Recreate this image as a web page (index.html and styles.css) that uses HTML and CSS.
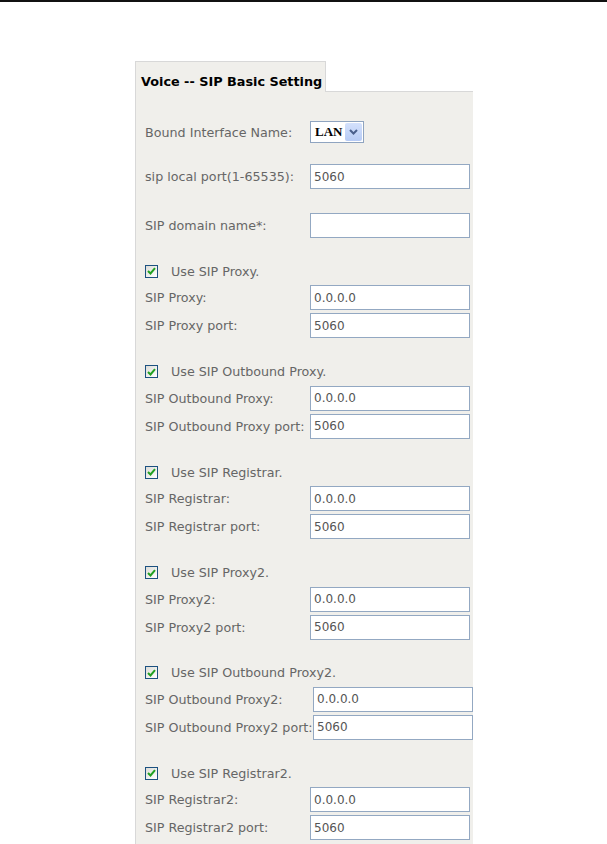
FILE: index.html
```html
<!DOCTYPE html>
<html>
<head>
<meta charset="utf-8">
<link rel="stylesheet" href="styles.css">
</head>
<body>
<div class="rule"></div>
<div class="page">
  <div class="panel">
    <div class="tabbar">
      <div class="tab">Voice -- SIP Basic Setting</div>
      <div class="tabfill"></div>
    </div>
    <div class="body">
      <div class="row row-select">
        <span class="label">Bound Interface Name:</span>
        <div class="select"><span class="sel-text">LAN</span><span class="sel-btn"><svg width="9" height="6" viewBox="0 0 9 6"><path d="M1 1 L4.5 4.5 L8 1" fill="none" stroke="#4a5f8c" stroke-width="2"/></svg></span></div>
      </div>
      <div class="row row-port">
        <span class="label">sip local port(1-65535):</span>
        <input class="field" type="text" value="5060">
      </div>
      <div class="row row-domain">
        <span class="label">SIP domain name*:</span>
        <input class="field" type="text" value="">
      </div>

      <div class="group">
        <div class="check-row"><span class="cb"><svg width="9" height="8" viewBox="0 0 9 8"><path d="M1 4 L3.5 6.5 L8 1.2" fill="none" stroke="#21a121" stroke-width="2"/></svg></span><span class="cb-label">Use SIP Proxy.</span></div>
        <div class="row"><span class="label">SIP Proxy:</span><input class="field" type="text" value="0.0.0.0"></div>
        <div class="row"><span class="label">SIP Proxy port:</span><input class="field" type="text" value="5060"></div>
      </div>

      <div class="group">
        <div class="check-row"><span class="cb"><svg width="9" height="8" viewBox="0 0 9 8"><path d="M1 4 L3.5 6.5 L8 1.2" fill="none" stroke="#21a121" stroke-width="2"/></svg></span><span class="cb-label">Use SIP Outbound Proxy.</span></div>
        <div class="row"><span class="label">SIP Outbound Proxy:</span><input class="field" type="text" value="0.0.0.0"></div>
        <div class="row"><span class="label">SIP Outbound Proxy port:</span><input class="field" type="text" value="5060"></div>
      </div>

      <div class="group">
        <div class="check-row"><span class="cb"><svg width="9" height="8" viewBox="0 0 9 8"><path d="M1 4 L3.5 6.5 L8 1.2" fill="none" stroke="#21a121" stroke-width="2"/></svg></span><span class="cb-label">Use SIP Registrar.</span></div>
        <div class="row"><span class="label">SIP Registrar:</span><input class="field" type="text" value="0.0.0.0"></div>
        <div class="row"><span class="label">SIP Registrar port:</span><input class="field" type="text" value="5060"></div>
      </div>

      <div class="group">
        <div class="check-row"><span class="cb"><svg width="9" height="8" viewBox="0 0 9 8"><path d="M1 4 L3.5 6.5 L8 1.2" fill="none" stroke="#21a121" stroke-width="2"/></svg></span><span class="cb-label">Use SIP Proxy2.</span></div>
        <div class="row"><span class="label">SIP Proxy2:</span><input class="field" type="text" value="0.0.0.0"></div>
        <div class="row"><span class="label">SIP Proxy2 port:</span><input class="field" type="text" value="5060"></div>
      </div>

      <div class="group group-wide">
        <div class="check-row"><span class="cb"><svg width="9" height="8" viewBox="0 0 9 8"><path d="M1 4 L3.5 6.5 L8 1.2" fill="none" stroke="#21a121" stroke-width="2"/></svg></span><span class="cb-label">Use SIP Outbound Proxy2.</span></div>
        <div class="row"><span class="label">SIP Outbound Proxy2:</span><input class="field" type="text" value="0.0.0.0"></div>
        <div class="row"><span class="label">SIP Outbound Proxy2 port:</span><input class="field" type="text" value="5060"></div>
      </div>

      <div class="group">
        <div class="check-row"><span class="cb"><svg width="9" height="8" viewBox="0 0 9 8"><path d="M1 4 L3.5 6.5 L8 1.2" fill="none" stroke="#21a121" stroke-width="2"/></svg></span><span class="cb-label">Use SIP Registrar2.</span></div>
        <div class="row"><span class="label">SIP Registrar2:</span><input class="field" type="text" value="0.0.0.0"></div>
        <div class="row"><span class="label">SIP Registrar2 port:</span><input class="field" type="text" value="5060"></div>
      </div>
    </div>
  </div>
</div>
</body>
</html>
```
FILE: styles.css
```css
html, body {
  margin: 0;
  padding: 0;
  background: #ffffff;
  height: 844px;
  overflow: hidden;
}
body {
  font-family: "DejaVu Sans", sans-serif;
  font-size: 12.7px;
  color: #666666;
}
.rule {
  height: 2px;
  background: #111111;
}
.page {
  padding-left: 135px;
  padding-top: 59px;
}
.panel {
  width: 338px;
}
.tabbar {
  display: flex;
  height: 31px;
}
.tab {
  width: 191px;
  border: 1px solid #d8d8d8;
  border-bottom: none;
  background: #f0efeb;
  color: #000000;
  font-weight: bold;
  font-size: 12.8px;
  padding-left: 5px;
  display: flex;
  align-items: center;
  padding-top: 8px;
  box-sizing: border-box;
  white-space: nowrap;
}
.tabfill {
  flex: 1;
  border-bottom: 1px solid #d8d8d8;
}
.body {
  background: #f0efeb;
  border-left: 1px solid #d8d8d8;
  padding-left: 9px;
  padding-top: 29px;
  height: 760px;
  display: flex;
  flex-direction: column;
}
.row {
  display: flex;
  align-items: center;
  height: 25px;
  margin-top: 3px;
}
.label {
  width: 165px;
  flex: none;
  white-space: nowrap;
}
.group-wide .label {
  width: 168px;
}
.row-select {
  height: 22px;
  margin-top: 0;
}
.row-port {
  margin-top: 21px;
}
.row-domain {
  margin-top: 24px;
}
.field {
  width: 160px;
  height: 25px;
  box-sizing: border-box;
  border: 1px solid #93a8c2;
  background: #ffffff;
  font-family: "DejaVu Sans", sans-serif;
  font-size: 12px;
  color: #555555;
  padding: 0 3px;
  margin: 0;
  outline: none;
}
.select {
  width: 54px;
  height: 22px;
  box-sizing: border-box;
  border: 1px solid #8fa4c0;
  background: #ffffff;
  display: flex;
  align-items: stretch;
  padding: 1px;
}
.sel-text {
  flex: 1;
  font-family: "Liberation Serif", serif;
  font-size: 13px;
  font-weight: bold;
  color: #000000;
  padding-left: 3px;
  display: flex;
  align-items: center;
}
.sel-btn {
  width: 17px;
  background: linear-gradient(#d4e1fc, #b7cbf5);
  border-radius: 2px;
  display: flex;
  align-items: center;
  justify-content: center;
}
.group {
  margin-top: 20.4px;
  display: flex;
  flex-direction: column;
}
.check-row {
  display: flex;
  align-items: center;
  height: 24px;
  padding-top: 2px;
  box-sizing: border-box;
}
.cb {
  width: 13px;
  height: 13px;
  box-sizing: border-box;
  border: 1px solid #1c5180;
  background: linear-gradient(135deg, #dcdcd7, #ffffff);
  display: flex;
  align-items: center;
  justify-content: center;
  margin-right: 13px;
  margin-left: 0;
}
.cb-label {
  white-space: nowrap;
}
```
